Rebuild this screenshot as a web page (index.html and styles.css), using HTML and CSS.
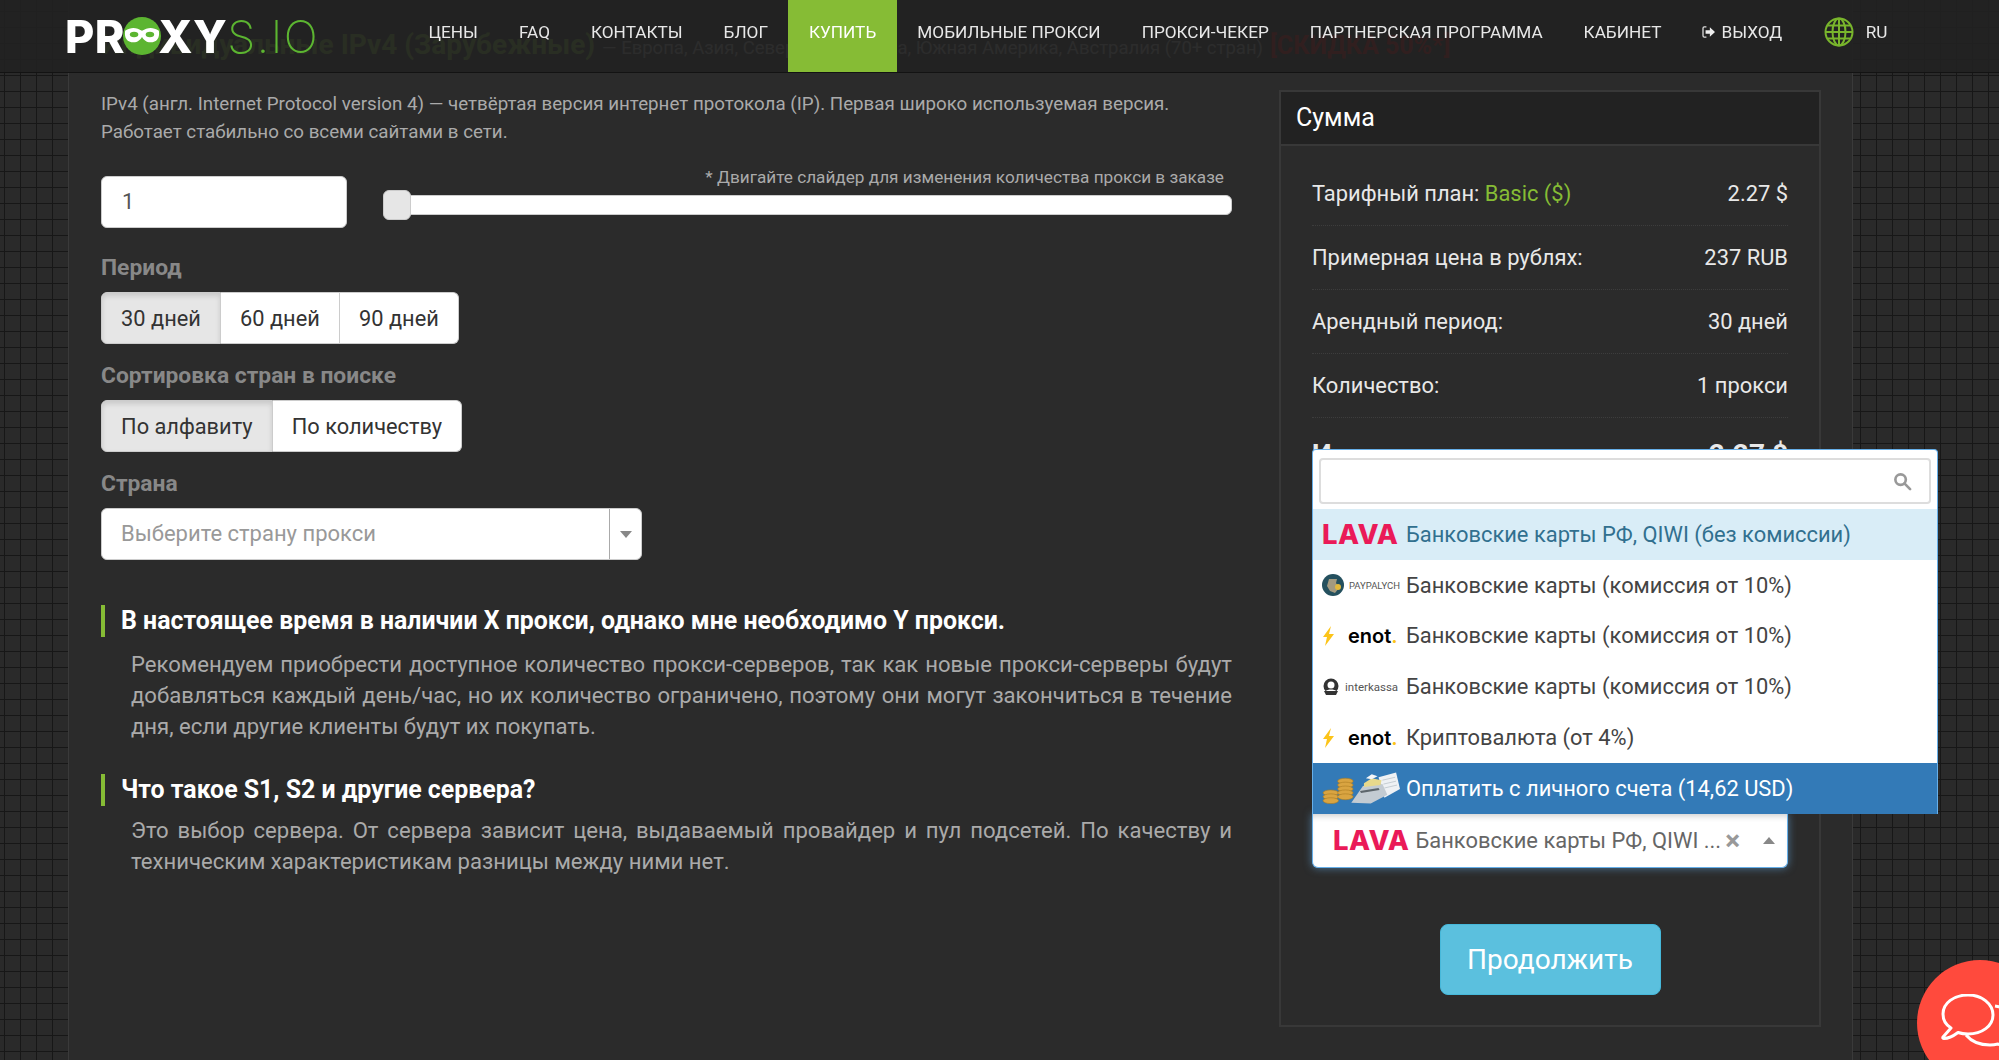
FILE: index.html
```html
<!DOCTYPE html>
<html lang="ru">
<head>
  <meta charset="UTF-8" />
  <title>Proxys.io</title>
  <link rel="stylesheet" href="styles.css">
</head>
<body>

  <!-- Top bar, sits over the page title -->
  <header class="topbar">
    <a href="#" class="logo">
      <span class="logo-bold">PR</span>
      <svg class="logo-mask" viewBox="0 0 36 36" width="38" height="38">
        <circle cx="18" cy="18" r="18" fill="#5cb531"/>
        <path d="M2 13c6-4 11-3 16 0 5-3 10-4 16 0 1 7-2 11-8 11-4 0-6-2-8-5-2 3-4 5-8 5-6 0-9-4-8-11z" fill="#fff"/>
        <ellipse cx="10.500" cy="16.500" rx="4" ry="2.600" fill="#5cb531"/>
        <ellipse cx="25.500" cy="16.500" rx="4" ry="2.600" fill="#5cb531"/>
      </svg>
      <span class="logo-bold">XY</span><span class="logo-thin">S.IO</span>
    </a>
    <nav class="nav">
      <a href="#" class="nav-link">ЦЕНЫ</a>
      <a href="#" class="nav-link">FAQ</a>
      <a href="#" class="nav-link">КОНТАКТЫ</a>
      <a href="#" class="nav-link">БЛОГ</a>
      <a href="#" class="nav-link active">КУПИТЬ</a>
      <a href="#" class="nav-link">МОБИЛЬНЫЕ ПРОКСИ</a>
      <a href="#" class="nav-link">ПРОКСИ-ЧЕКЕР</a>
      <a href="#" class="nav-link">ПАРТНЕРСКАЯ ПРОГРАММА</a>
      <a href="#" class="nav-link">КАБИНЕТ</a>
      <a href="#" class="nav-link">
        <svg class="logout-icon" viewBox="0 0 16 14" width="14" height="12">
          <path d="M5 1H2.500A1.500 1.500 0 0 0 1 2.500v9A1.500 1.500 0 0 0 2.500 13H5" fill="none" stroke="#ddd" stroke-width="1.500"/>
          <path d="M4 5h5V1.500L15 7l-6 5.500V9H4z" fill="#eee"/>
        </svg>
        ВЫХОД
      </a>
      <a href="#" class="nav-lang">
        <svg viewBox="0 0 30 30" width="30" height="30" fill="none" stroke="#79b52c" stroke-width="2">
          <circle cx="15" cy="15" r="13.500"/>
          <ellipse cx="15" cy="15" rx="6.500" ry="13.500"/>
          <path d="M15 1.500v27M1.500 15h27M3.500 8.500h23M3.500 21.500h23"/>
        </svg>
        RU
      </a>
    </nav>
  </header>

  <main class="panel">
    <h1 class="page-title">
      <span class="title-green">Индивидуальные IPv4 (Зарубежные)</span>
      <span class="title-grey">— Европа, Азия, Северная Америка, Южная Америка, Австралия (70+ стран)</span>
      <span class="title-red">[СКИДКА 50%*]</span>
    </h1>

    <div class="columns">
      <section class="order">
        <p class="intro">IPv4 (англ. Internet Protocol version 4) — четвёртая версия интернет протокола (IP). Первая широко используемая версия.<br>Работает стабильно со всеми сайтами в сети.</p>

        <div class="qty-row">
          <div class="qty-input">1</div>
          <div class="slider-wrap">
            <div class="slider-note">* Двигайте слайдер для изменения количества прокси в заказе</div>
            <div class="slider-track"><span class="slider-handle"></span></div>
          </div>
        </div>

        <div class="field-label">Период</div>
        <div class="btn-group">
          <button class="group-btn selected">30 дней</button>
          <button class="group-btn">60 дней</button>
          <button class="group-btn">90 дней</button>
        </div>

        <div class="field-label">Сортировка стран в поиске</div>
        <div class="btn-group">
          <button class="group-btn selected">По алфавиту</button>
          <button class="group-btn">По количеству</button>
        </div>

        <div class="field-label">Страна</div>
        <div class="country-select">
          <span class="country-text">Выберите страну прокси</span>
          <span class="country-arrow"><i class="caret-down"></i></span>
        </div>

        <h3 class="faq-title first">В настоящее время в наличии X прокси, однако мне необходимо Y прокси.</h3>
        <p class="faq-text">Рекомендуем приобрести доступное количество прокси-серверов, так как новые прокси-серверы будут добавляться каждый день/час, но их количество ограничено, поэтому они могут закончиться в течение дня, если другие клиенты будут их покупать.</p>

        <h3 class="faq-title">Что такое S1, S2 и другие сервера?</h3>
        <p class="faq-text">Это выбор сервера. От сервера зависит цена, выдаваемый провайдер и пул подсетей. По качеству и техническим характеристикам разницы между ними нет.</p>
      </section>

      <aside class="summary">
        <div class="summary-head">Сумма</div>
        <div class="summary-body">
          <div class="sum-row"><span>Тарифный план: <b class="plan">Basic ($)</b></span><span>2.27 $</span></div>
          <div class="sum-row"><span>Примерная цена в рублях:</span><span>237 RUB</span></div>
          <div class="sum-row"><span>Арендный период:</span><span>30 дней</span></div>
          <div class="sum-row"><span>Количество:</span><span>1 прокси</span></div>
          <div class="sum-row total"><span>Итого:</span><span>2.27 $</span></div>

          <div class="pay-select">
            <div class="pay-current">
              <span class="lava lava-big">LAVA</span>
              <span class="pay-text">Банковские карты РФ, QIWI ...</span>
              <span class="pay-clear">×</span>
              <i class="caret-up"></i>
            </div>

            <!-- open dropdown -->
            <div class="pay-menu">
              <div class="pay-search">
                <svg viewBox="0 0 20 20" width="19" height="19" fill="none" stroke="#999" stroke-width="2.800">
                  <circle cx="8" cy="8" r="5.500"/>
                  <path d="M12 12l6 6" stroke-linecap="round"/>
                </svg>
              </div>
              <ul class="pay-list">
                <li class="pay-opt hover">
                  <span class="pay-logo"><span class="lava">LAVA</span></span>
                  Банковские карты РФ, QIWI (без комиссии)
                </li>
                <li class="pay-opt">
                  <span class="pay-logo">
                    <svg viewBox="0 0 22 22" width="22" height="22">
                      <circle cx="11" cy="11" r="11" fill="#24505e"/>
                      <path d="M7 5h8l-1 4 3 5-4 5-5-2-3-5z" fill="#a39a80"/>
                      <circle cx="16" cy="13" r="3" fill="#e2b93b"/>
                    </svg>
                    <span class="logo-paypalych">PAYPALYCH</span>
                  </span>
                  Банковские карты (комиссия от 10%)
                </li>
                <li class="pay-opt">
                  <span class="pay-logo">
                    <svg class="bolt" viewBox="0 0 13 20" width="13" height="20"><path d="M9 0L1 11h4l-2 9 9-12H7z" fill="#fcc419"/></svg>
                    <span class="logo-enot">enot<em>.</em></span>
                  </span>
                  Банковские карты (комиссия от 10%)
                </li>
                <li class="pay-opt">
                  <span class="pay-logo">
                    <svg viewBox="0 0 18 18" width="18" height="18">
                      <circle cx="9" cy="8" r="7.500" fill="#333"/>
                      <circle cx="9" cy="7" r="3.500" fill="#fff"/>
                      <path d="M2 13h14l-2 4H4z" fill="#333"/>
                      <path d="M4 13c1-2 9-2 10 0z" fill="#fff"/>
                    </svg>
                    <span class="logo-interkassa">interkassa</span>
                  </span>
                  Банковские карты (комиссия от 10%)
                </li>
                <li class="pay-opt">
                  <span class="pay-logo">
                    <svg class="bolt" viewBox="0 0 13 20" width="13" height="20"><path d="M9 0L1 11h4l-2 9 9-12H7z" fill="#fcc419"/></svg>
                    <span class="logo-enot">enot<em>.</em></span>
                  </span>
                  Криптовалюта (от 4%)
                </li>
                <li class="pay-opt current">
                  <span class="pay-logo">
                    <svg viewBox="0 0 80 34" width="80" height="34">
                      <g fill="#d9a441" stroke="#a87a20" stroke-width=".6">
                        <ellipse cx="9" cy="22" rx="8" ry="3"/>
                        <ellipse cx="9" cy="26" rx="8" ry="3"/>
                        <ellipse cx="9" cy="30" rx="8" ry="3"/>
                        <ellipse cx="24" cy="10" rx="8" ry="3"/>
                        <ellipse cx="24" cy="14" rx="8" ry="3"/>
                        <ellipse cx="24" cy="18" rx="8" ry="3"/>
                        <ellipse cx="24" cy="22" rx="8" ry="3"/>
                        <ellipse cx="24" cy="26" rx="8" ry="3"/>
                      </g>
                      <path d="M58 6l18-5 4 17-16 9z" fill="#eef1f4"/>
                      <path d="M62 9l13-3M63 13l13-3M64 17l13-3" stroke="#b9c2c9" stroke-width=".8" fill="none"/>
                      <path d="M30 32l12-17 20-2 5 11-17 9z" fill="#c3cbd2"/>
                      <path d="M43 12l8-5 10 2-1 5-17 2z" fill="#e8d98c"/>
                      <path d="M45 7l6-4 6 2-6 3z" fill="#f4f6f8"/>
                      <path d="M39 20l19-3 1 2-19 3z" fill="#5d666c"/>
                    </svg>
                  </span>
                  Оплатить с личного счета (14,62 USD)
                </li>
              </ul>
            </div>
          </div>

          <div class="submit-row"><button class="btn-continue">Продолжить</button></div>
        </div>
      </aside>
    </div>
  </main>

  <!-- Chat widget -->
  <div class="chat-bubble">
    <svg viewBox="0 0 80 64" width="80" height="64" fill="none" stroke="#fff" stroke-width="3" stroke-linejoin="round">
      <path d="M27 1C13 1 2 9 2 20c0 6 3 11 8 14L2 43c-.5 1 0 1.500 1 1.500 5 0 10-3 14-6 3 1 6 1.500 10 1.500 14 0 25-8 25-19S41 1 27 1z"/>
      <path d="M25 41c5 6 14 10 24 10 3 0 6-.5 8-1l12 6M54 12c8 1 16 5 20 10"/>
    </svg>
  </div>

</body>
</html>
```

FILE: styles.css
```css
* {
  box-sizing: border-box;
}

html, body {
  height: 100%;
}

body {
  margin: 0;
  overflow: hidden;
  font-family: 'Roboto', 'Liberation Sans', sans-serif;
  color: #aaa;
  background-color: #2a2a2a;
  background-image:
    linear-gradient(to right, #171717 1px, transparent 1px),
    linear-gradient(to bottom, #171717 1px, transparent 1px);
  background-size: 16px 16px;
  background-position: 4px 11px;
}

/* top bar */
.topbar {
  position: fixed;
  top: 0;
  left: 0;
  right: 0;
  z-index: 10;
  display: flex;
  height: 73px;
  padding-left: 65px;
  background: rgba(34, 34, 34, 0.92);
  border-bottom: 1px solid #131313;
}

.logo {
  flex: none;
  width: 343px;
  display: flex;
  align-items: center;
  height: 72px;
  font-size: 45px;
  line-height: 1;
  text-decoration: none;
  font-family: 'Inter', 'Liberation Sans', sans-serif;
}

.logo-bold {
  color: #fff;
  font-weight: 800;
  letter-spacing: 0.500px;
}

.logo-mask {
  flex: none;
  margin: 0 -3px 0 -2px;
}

.logo-thin {
  color: #5cb531;
  font-weight: 200;
  letter-spacing: 1.500px;
}

.nav {
  display: flex;
  height: 72px;
  font-size: 17.200px;
}

.nav-link {
  display: flex;
  align-items: center;
  padding: 0 20.500px 8px;
  color: #e8e8e8;
  text-decoration: none;
}

.nav-link.active {
  background: #86bc35;
  color: #fff;
}

.logout-icon {
  margin-right: 5px;
}

.nav-lang {
  display: flex;
  align-items: center;
  gap: 12px;
  margin-left: 21px;
  padding-bottom: 8px;
  color: #e8e8e8;
  text-decoration: none;
}

/* main panel */
.panel {
  width: 1785px;
  height: 100%;
  margin-left: 68px;
  padding: 25px 32px 0;
  background: #2b2b2b;
  border-left: 1px solid #3a3a3a;
  border-right: 1px solid #3a3a3a;
}

.page-title {
  height: 40px;
  margin: 0 0 25px;
  font-size: 28px;
  line-height: 40px;
  white-space: nowrap;
  font-weight: 400;
}

.title-green {
  color: #86bc35;
  font-weight: 700;
}

.title-grey {
  font-size: 18.500px;
  color: #aaa;
}

.title-red {
  font-size: 25px;
  color: #d00;
  font-weight: 700;
}

.columns {
  display: flex;
  gap: 47px;
}

.order {
  width: 1131px;
  flex: none;
}

.intro {
  margin: 0 0 30px;
  font-size: 18.760px;
  line-height: 28px;
}

.qty-row {
  display: flex;
  gap: 36px;
  height: 52px;
  align-items: flex-end;
  margin-bottom: 28px;
}

.qty-input {
  flex: none;
  width: 246px;
  height: 52px;
  padding: 0 20px;
  line-height: 50px;
  font-size: 21.800px;
  color: #555;
  background: #fff;
  border: 1px solid #ccc;
  border-radius: 6px;
}

.slider-wrap {
  flex: 1;
  padding-bottom: 13px;
}

.slider-note {
  margin-bottom: 8px;
  padding-right: 8px;
  text-align: right;
  font-size: 17.200px;
  line-height: 20px;
}

.slider-track {
  position: relative;
  height: 20px;
  background: #fff;
  border: 1px solid #ccc;
  border-radius: 6px;
}

.slider-handle {
  position: absolute;
  left: -1px;
  top: -6px;
  width: 28px;
  height: 30px;
  background: #e6e6e6;
  border: 1px solid #ccc;
  border-radius: 6px;
}

.field-label {
  margin-bottom: 12px;
  font-size: 22.800px;
  line-height: 24px;
  font-weight: 700;
  color: #888;
}

.btn-group {
  display: flex;
  width: fit-content;
  margin-bottom: 20px;
}

.group-btn {
  height: 52px;
  padding: 0 19.100px;
  font-family: inherit;
  font-size: 21.800px;
  color: #333;
  background: #fff;
  border: 1px solid #ccc;
  border-left-width: 0;
}

.group-btn:first-child {
  border-left-width: 1px;
  border-radius: 6px 0 0 6px;
}

.group-btn:last-child {
  border-radius: 0 6px 6px 0;
}

.group-btn.selected {
  background: #e6e6e6;
  box-shadow: inset 0 3px 5px rgba(0, 0, 0, 0.125);
}

.country-select {
  display: flex;
  width: 541px;
  height: 52px;
  background: #fff;
  border: 1px solid #ccc;
  border-radius: 6px;
}

.country-text {
  flex: 1;
  padding-left: 19px;
  line-height: 50px;
  font-size: 22px;
  color: #999;
}

.country-arrow {
  flex: none;
  width: 32px;
  display: flex;
  align-items: center;
  justify-content: center;
  border-left: 1px solid #aaa;
}

.caret-down {
  border: 6px solid transparent;
  border-top: 7px solid #888;
  border-bottom: 0;
}

.caret-up {
  border: 6px solid transparent;
  border-bottom: 7px solid #888;
  border-top: 0;
}

.faq-title {
  margin: 32px 0 9px;
  padding-left: 16px;
  border-left: 4px solid #86bc35;
  font-size: 24.900px;
  line-height: 32px;
  font-weight: 700;
  color: #fff;
}

.faq-title.first {
  margin: 45px 0 12px;
}

.faq-text {
  margin: 0 0 0 30px;
  font-size: 22.100px;
  line-height: 31px;
  text-align: justify;
  color: #aaa;
}

/* summary box */
.summary {
  width: 542px;
  flex: none;
  height: 937px;
  background: #2b2b2b;
  border: 2px solid #383838;
}

.summary-head {
  height: 54px;
  padding-left: 15px;
  line-height: 52px;
  font-size: 25px;
  color: #fff;
  background: #222;
  border-bottom: 2px solid #383838;
}

.summary-body {
  padding: 16px 31px 0;
}

.sum-row {
  display: flex;
  justify-content: space-between;
  align-items: center;
  height: 64px;
  font-size: 21.900px;
  color: #e8e8e8;
  border-bottom: 1px dotted #3d3d3d;
}

.plan {
  font-weight: 400;
  color: #86bc35;
}

.sum-row.total {
  padding-top: 8px;
  border-bottom: 0;
  font-size: 28px;
  font-weight: 700;
}

/* payment select */
.pay-select {
  position: relative;
  margin-top: 332px;
  z-index: 2;
}

.pay-current {
  display: flex;
  align-items: center;
  width: 476px;
  height: 54px;
  padding: 0 12px 0 20px;
  background: #fff;
  border: 1px solid #66afe9;
  border-top: 0;
  border-radius: 0 0 6px 6px;
  box-shadow: 0 0 8px rgba(102, 175, 233, 0.6), inset 0 6px 6px -4px rgba(0, 0, 0, 0.2);
}

.lava {
  flex: none;
  margin-left: 3px;
  font-family: 'Inter', 'Liberation Sans', sans-serif;
  font-size: 27.500px;
  line-height: 1;
  font-weight: 800;
  color: #ea1a58;
  letter-spacing: 0.500px;
}

.lava-big {
  margin: 0 6px 0 0;
}

.pay-text {
  flex: 1;
  min-width: 0;
  font-size: 21.900px;
  color: #666;
  white-space: nowrap;
}

.pay-clear {
  flex: none;
  margin: 0 23px 0 6px;
  font-size: 28px;
  line-height: 1;
  font-weight: 700;
  color: #999;
}

.pay-menu {
  position: absolute;
  left: 0;
  bottom: 100%;
  width: 626px;
  height: 365px;
  padding-top: 8px;
  background: #fff;
  border: 1px solid #66afe9;
  border-bottom: 0;
  border-radius: 4px 4px 0 0;
}

.pay-search {
  display: flex;
  align-items: center;
  justify-content: flex-end;
  height: 46px;
  margin: 0 6px 5px;
  padding-right: 17px;
  border: 2px solid #ddd;
  border-radius: 4px;
}

.pay-list {
  list-style: none;
  margin: 0;
  padding: 0;
}

.pay-opt {
  display: flex;
  align-items: center;
  height: 50.800px;
  padding-left: 6px;
  font-size: 21.900px;
  color: #444;
}

.pay-opt.hover {
  background: #d9edf7;
  color: #31708f;
}

.pay-opt.current {
  background: #337ab7;
  color: #fff;
}

.pay-logo {
  flex: none;
  width: 81px;
  margin-right: 6px;
  display: flex;
  align-items: center;
  gap: 5px;
}

.pay-logo > svg:first-child {
  margin-left: 3px;
}

.bolt {
  margin: 0 8px 0 3px;
}

.logo-paypalych {
  font-size: 9.500px;
  color: #555;
}

.logo-enot {
  font-family: 'Inter', 'Liberation Sans', sans-serif;
  font-size: 20px;
  font-weight: 600;
  color: #000;
}

.logo-enot em {
  font-style: normal;
  color: #fcc419;
}

.logo-interkassa {
  font-size: 11.500px;
  color: #555;
}

.submit-row {
  display: flex;
  justify-content: center;
  margin-top: 56px;
}

.btn-continue {
  width: 221px;
  height: 71px;
  font-family: inherit;
  font-size: 28px;
  color: #fff;
  background: #5bc0de;
  border: 1px solid #46b8da;
  border-radius: 8px;
}

.chat-bubble {
  position: fixed;
  left: 1917px;
  top: 960px;
  width: 126px;
  height: 126px;
  border-radius: 50%;
  background: #ff4a3d;
  overflow: hidden;
  padding: 34px 0 0 24px;
  z-index: 20;
}
```
